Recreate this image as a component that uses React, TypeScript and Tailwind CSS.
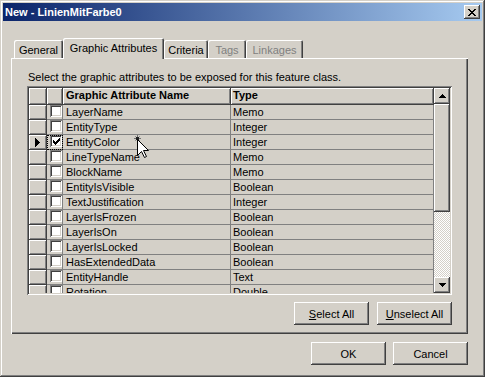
import React from "react";

const RAISED =
  "shadow-[inset_-1px_-1px_0_#404040,inset_1px_1px_0_#fff,inset_-2px_-2px_0_#808080,inset_2px_2px_0_#d4d0c8]";
const SUNKEN =
  "shadow-[inset_1px_1px_0_#808080,inset_-1px_-1px_0_#fff,inset_2px_2px_0_#404040,inset_-2px_-2px_0_#d4d0c8]";

function Bitmap({ map, color = "#000", className = "" }: { map: string[]; color?: string; className?: string }) {
  const h = map.length;
  const w = map[0].length;
  const rects: React.ReactElement[] = [];
  map.forEach((row, y) =>
    row.split("").forEach((c, x) => {
      if (c === "X") rects.push(<rect key={`${x}-${y}`} x={x} y={y} width={1} height={1} fill={color} />);
    })
  );
  return (
    <svg width={w} height={h} viewBox={`0 0 ${w} ${h}`} className={className} shapeRendering="crispEdges">
      {rects}
    </svg>
  );
}

const CLOSE_X = ["XX....XX", ".XX..XX.", "..XXXX..", "...XX...", "..XXXX..", ".XX..XX.", "XX....XX"];
const CHECK = ["......X", ".....XX", "X...XXX", "XX.XXX.", "XXXXX..", ".XXX...", "..X...."];
const UP = ["...X...", "..XXX..", ".XXXXX.", "XXXXXXX"];
const DOWN = ["XXXXXXX", ".XXXXX.", "..XXX..", "...X..."];
const RIGHT = ["X....", "XX...", "XXX..", "XXXX.", "XXXXX", "XXXX.", "XXX..", "XX...", "X...."];

const rows: [string, string][] = [
  ["LayerName", "Memo"],
  ["EntityType", "Integer"],
  ["EntityColor", "Integer"],
  ["LineTypeName", "Memo"],
  ["BlockName", "Memo"],
  ["EntityIsVisible", "Boolean"],
  ["TextJustification", "Integer"],
  ["LayerIsFrozen", "Boolean"],
  ["LayerIsOn", "Boolean"],
  ["LayerIsLocked", "Boolean"],
  ["HasExtendedData", "Boolean"],
  ["EntityHandle", "Text"],
  ["Rotation", "Double"],
];

function Tab({ label, width, selected, disabled }: { label: string; width: string; selected?: boolean; disabled?: boolean }) {
  if (selected) {
    return (
      <div
        className={`${width} h-[21px] mb-[-1px] relative z-10 bg-[#d4d0c8] rounded-t-[2px] shadow-[inset_1px_1px_0_#fff,inset_-1px_0_0_#404040,inset_-2px_0_0_#808080] flex justify-center pt-[3px] leading-[14px]`}
      >
        {label}
      </div>
    );
  }
  return (
    <div
      className={`${width} h-[18px] bg-[#d4d0c8] rounded-t-[2px] shadow-[inset_1px_1px_0_#fff,inset_-1px_0_0_#404040,inset_-2px_0_0_#808080] flex justify-center pt-[3px] leading-[14px] ${
        disabled ? "text-[#808080]" : "text-black"
      }`}
    >
      {label}
    </div>
  );
}

function Button({ children, className = "" }: { children: React.ReactNode; className?: string }) {
  return (
    <div className={`w-[75px] h-[23px] bg-[#d4d0c8] ${RAISED} flex items-center justify-center leading-[14px] ${className}`}>
      {children}
    </div>
  );
}

export default function App() {
  return (
    <div className="relative w-[485px] h-[377px] bg-[#d4d0c8] p-[3px] flex flex-col text-[11px] text-black font-['Liberation_Sans',Arial,sans-serif] shadow-[inset_-1px_-1px_0_#404040,inset_1px_1px_0_#d4d0c8,inset_-2px_-2px_0_#808080,inset_2px_2px_0_#fff] select-none">
      {/* Title bar */}
      <div className="h-[18px] flex items-center bg-[linear-gradient(to_right,#0a246a,#a6caf0)] pl-[2px] pr-[2px]">
        <span className="flex-1 text-white font-bold text-[11px] leading-[14px]">New - LinienMitFarbe0</span>
        <div className={`w-[16px] h-[14px] bg-[#d4d0c8] ${RAISED} flex items-center justify-center`}>
          <Bitmap map={CLOSE_X} className="ml-[-1px]" />
        </div>
      </div>

      {/* Tabs */}
      <div className="mt-[17px] ml-[8px] h-[20px] flex items-end pl-[3px]">
        <Tab label="General" width="w-[49px]" />
        <Tab label="Graphic Attributes" width="w-[101px]" selected />
        <Tab label="Criteria" width="w-[44px]" />
        <Tab label="Tags" width="w-[38px]" disabled />
        <Tab label="Linkages" width="w-[57px]" disabled />
      </div>

      {/* Panel */}
      <div className="ml-[8px] w-[457px] h-[276px] shadow-[inset_1px_1px_0_#fff,inset_-1px_-1px_0_#404040,inset_-2px_-2px_0_#808080] pl-[16px] pt-[12px] flex flex-col">
        <div className="h-[16px] pl-[1px] leading-[14px]">Select the graphic attributes to be exposed for this feature class.</div>

        {/* Grid */}
        <div className={`w-[425px] h-[209px] p-[2px] ${SUNKEN} flex`}>
          <div className="w-[405px] h-[205px] overflow-hidden flex flex-col">
            {/* header */}
            <div className="h-[17px] flex shrink-0">
              <div className="w-[18px] h-full border-r border-b border-[#404040] shadow-[inset_1px_1px_0_#fff,inset_-1px_-1px_0_#808080]" />
              <div className="w-[16px] h-full border-r border-b border-[#404040] shadow-[inset_1px_1px_0_#fff,inset_-1px_-1px_0_#808080]" />
              <div className="w-[168px] h-full border-r border-b border-[#404040] shadow-[inset_1px_1px_0_#fff,inset_-1px_-1px_0_#808080] pl-[3px] font-bold leading-[15px]">
                Graphic Attribute Name
              </div>
              <div className="flex-1 h-full border-r border-b border-[#404040] shadow-[inset_1px_1px_0_#fff,inset_-1px_-1px_0_#808080] pl-[2px] font-bold leading-[15px]">
                Type
              </div>
            </div>
            {rows.map(([name, type], i) => {
              const current = i === 2;
              return (
                <div key={name} className="h-[15px] flex shrink-0">
                  <div className="w-[18px] h-full border-r border-b border-[#404040] shadow-[inset_1px_1px_0_#fff,inset_-1px_-1px_0_#808080] flex items-center pl-[6px]">
                    {current && <Bitmap map={RIGHT} />}
                  </div>
                  <div
                    className={`w-[16px] h-full border-r border-b border-[#808080] pl-[3px] ${
                      current ? "outline outline-1 outline-dotted outline-black outline-offset-[-1px]" : ""
                    }`}
                  >
                    <div className={`w-[12px] h-[12px] bg-white ${SUNKEN} flex items-center justify-center`}>
                      {current && <Bitmap map={CHECK} />}
                    </div>
                  </div>
                  <div className="w-[168px] h-full border-r border-b border-[#808080] pl-[3px] leading-[14px]">{name}</div>
                  <div className="flex-1 h-full border-r border-b border-[#808080] pl-[2px] leading-[14px]">{type}</div>
                </div>
              );
            })}
          </div>
          {/* scrollbar */}
          <div className="w-[16px] h-[205px] flex flex-col">
            <div className={`h-[16px] bg-[#d4d0c8] ${RAISED} flex items-center justify-center`}>
              <Bitmap map={UP} />
            </div>
            <div className={`h-[108px] bg-[#d4d0c8] ${RAISED}`} />
            <div className="flex-1 bg-[conic-gradient(#fff_25%,#d4d0c8_0_50%,#fff_0_75%,#d4d0c8_0)] bg-[length:2px_2px]" />
            <div className={`h-[16px] bg-[#d4d0c8] ${RAISED} flex items-center justify-center`}>
              <Bitmap map={DOWN} />
            </div>
          </div>
        </div>

        <div className="w-[425px] mt-[7px] flex justify-end gap-[8px]">
          <Button>
            <span className="underline underline-offset-[1px]">S</span>elect All
          </Button>
          <Button>
            <span className="underline underline-offset-[1px]">U</span>nselect All
          </Button>
        </div>
      </div>

      {/* OK / Cancel */}
      <div className="mt-[8px] mr-[14px] flex justify-end gap-[7px]">
        <Button>OK</Button>
        <Button>Cancel</Button>
      </div>

      {/* mouse cursor overlay */}
      <svg className="absolute left-[133px] top-[134px]" width="9" height="9" viewBox="0 0 9 9" shapeRendering="crispEdges">
        <rect x="3" y="3" width="3" height="3" fill="#202020" />
        <rect x="4" y="1" width="1" height="2" fill="#707070" />
        <rect x="4" y="6" width="1" height="2" fill="#707070" />
        <rect x="1" y="4" width="2" height="1" fill="#707070" />
        <rect x="6" y="4" width="2" height="1" fill="#707070" />
        <rect x="2" y="2" width="1" height="1" fill="#909090" />
        <rect x="6" y="2" width="1" height="1" fill="#909090" />
        <rect x="2" y="6" width="1" height="1" fill="#909090" />
        <rect x="6" y="6" width="1" height="1" fill="#909090" />
      </svg>
      <svg className="absolute left-[137px] top-[139px]" width="13" height="20" viewBox="0 0 13 20">
        <path d="M0.5 0.5 L0.5 16.5 L4.5 12.5 L7.5 18.5 L9.5 17.5 L6.5 11.5 L11.5 11.5 Z" fill="#fff" stroke="#000" strokeWidth="1" strokeLinejoin="miter" />
      </svg>
    </div>
  );
}
